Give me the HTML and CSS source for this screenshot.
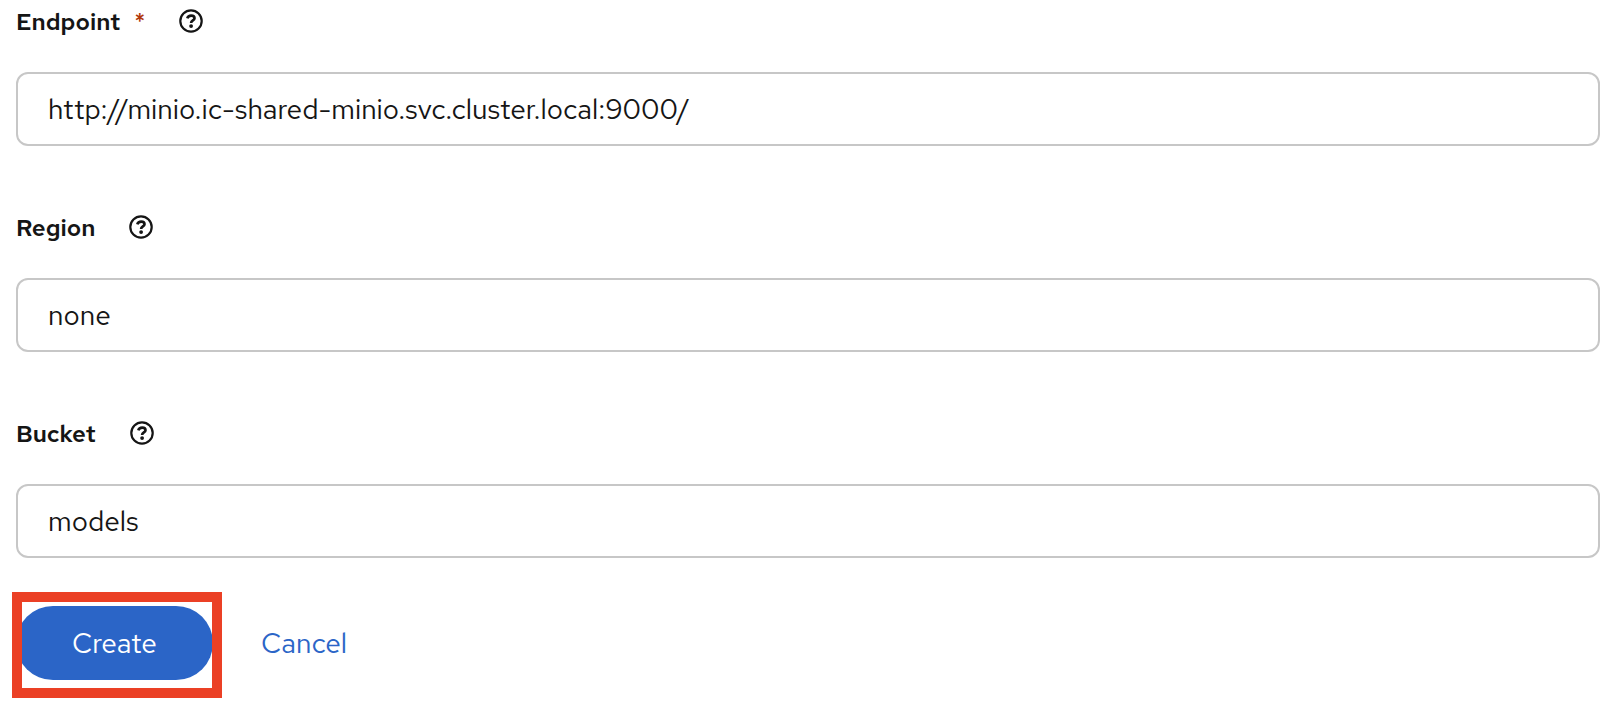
FILE: index.html
```html
<!DOCTYPE html>
<html lang="en">
<head>
<meta charset="utf-8">
<meta name="viewport" content="width=device-width, initial-scale=1">
<title>Create connection</title>
<link rel="stylesheet" href="styles.css">
</head>
<body>
<svg class="sprite" aria-hidden="true">
  <symbol id="help" viewBox="0 0 24 24">
    <circle cx="12" cy="12" r="10.7" fill="none" stroke="currentColor" stroke-width="2.2"/>
    <path d="M8.3 9.4C8.9 7.5 10.3 6.7 12.2 6.7C14.4 6.7 15.5 7.8 15.5 9.2C15.5 11.5 12.1 11.4 12.1 14" fill="none" stroke="currentColor" stroke-width="2.7"/>
    <circle cx="12.1" cy="17.1" r="1.9" fill="currentColor"/>
  </symbol>
</svg>
<form class="form">
  <div class="field">
    <div class="label-row">
      <label class="label" for="endpoint">Endpoint</label>
      <span class="required" aria-hidden="true">*</span>
      <button class="help" type="button" aria-label="Help for endpoint"><svg class="help-icon"><use href="#help"/></svg></button>
    </div>
    <input class="input" id="endpoint" type="text" required value="http://minio.ic-shared-minio.svc.cluster.local:9000/">
  </div>
  <div class="field">
    <div class="label-row">
      <label class="label" for="region">Region</label>
      <button class="help" type="button" aria-label="Help for region"><svg class="help-icon"><use href="#help"/></svg></button>
    </div>
    <input class="input" id="region" type="text" value="none">
  </div>
  <div class="field">
    <div class="label-row">
      <label class="label" for="bucket">Bucket</label>
      <button class="help" type="button" aria-label="Help for bucket"><svg class="help-icon"><use href="#help"/></svg></button>
    </div>
    <input class="input" id="bucket" type="text" value="models">
  </div>
  <div class="actions">
    <div class="highlight"><button class="btn primary" type="submit">Create</button></div>
    <button class="btn link" type="button">Cancel</button>
  </div>
</form>
</body>
</html>
```
FILE: styles.css
```css
* { box-sizing: border-box; }

body {
  margin: 0;
  background: #fff;
  color: #151515;
  font-family: "Red Hat Text", Lato, sans-serif;
  font-size: 28px;
}

.sprite { position: absolute; width: 0; height: 0; }

.form { padding: 4px 20px 24px 16px; }

.field { margin-bottom: 64px; }
.field:nth-of-type(3) { margin-bottom: 48px; }

.label-row {
  display: flex;
  align-items: center;
  height: 36px;
  margin-bottom: 32px;
}

.label { font-size: 24px; font-weight: 600; line-height: 36px; }

.required { margin-left: 14px; color: #b1380b; font-size: 24px; font-weight: 500; line-height: 36px; }

.help {
  display: flex;
  margin-left: 34px;
  padding: 0 0 2px;
  border: 0;
  background: none;
  color: #151515;
}

.help-icon { width: 24px; height: 24px; }

.input {
  display: block;
  width: 100%;
  height: 74px;
  padding: 0 30px;
  border: 2px solid #c7c7c7;
  border-radius: 12px;
  background: #fff;
  color: inherit;
  font: inherit;
}

.actions { display: flex; }

.highlight { position: relative; }

.highlight::after {
  content: "";
  position: absolute;
  inset: -14px -9px -18px -4px;
  border: 10px solid #eb4025;
  pointer-events: none;
}

.btn {
  height: 74px;
  padding: 0 56px;
  border: 0;
  border-radius: 37px;
  font: inherit;
}

.primary { background: #2b65c7; color: #fff; }

.link { padding: 0 48px; background: none; color: #2b65c7; }
```
